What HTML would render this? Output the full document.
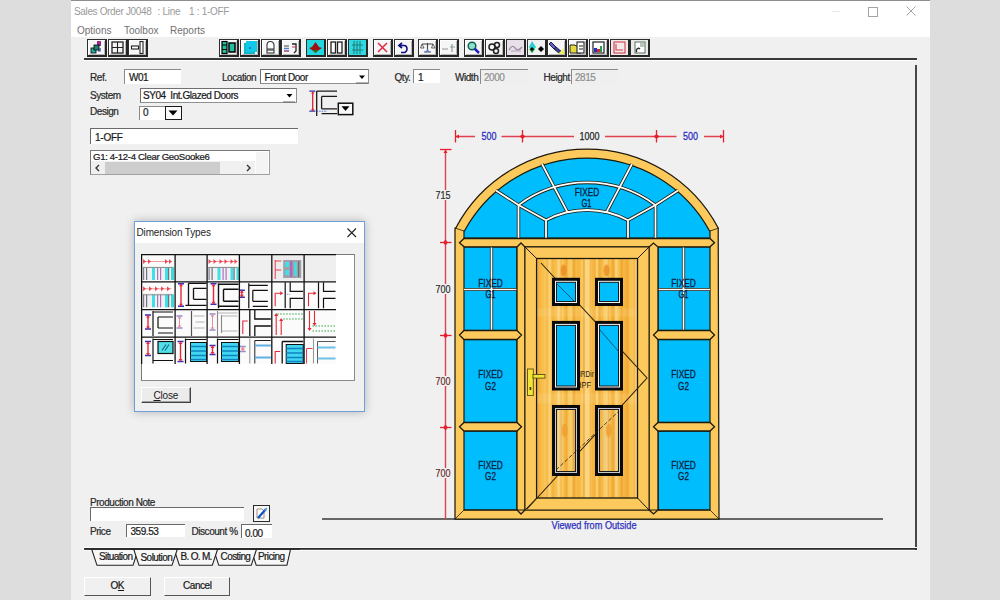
<!DOCTYPE html>
<html><head><meta charset="utf-8">
<style>
html,body{margin:0;padding:0;width:1000px;height:600px;overflow:hidden;background:#dddddd;font-family:"Liberation Sans",sans-serif;}
.a{position:absolute}
#win{position:absolute;left:71px;top:0;width:859px;height:600px;background:#f0f0f0;}
#title{position:absolute;left:71px;top:0;width:859px;height:37px;background:#fff;border-top:1.2px solid #8e8e8e;box-sizing:border-box}
.t{position:absolute;white-space:pre;font-size:10px;line-height:12px;color:#333}
.lbl{position:absolute;white-space:pre;font-size:10px;line-height:12px;color:#2a2a2a;letter-spacing:-0.45px;-webkit-text-stroke:0.22px currentColor}
.tb{position:absolute;top:39.2px;width:16.6px;height:14.6px;border:1px solid #2e2e2e;border-right:2px solid #262626;border-bottom:2px solid #262626;background:#f6f6f6;overflow:hidden;box-shadow:inset 1px 1px 0 #fff, inset -1px -1px 0 #b8b8b8}
.inp{position:absolute;background:#fff;border-top:1px solid #8a8a8a;border-left:1px solid #8a8a8a;box-sizing:border-box}
.inpg{position:absolute;background:#efefef;border-top:1px solid #8a8a8a;border-left:1px solid #8a8a8a;box-sizing:border-box}
.dd{position:absolute;width:13px;height:13px;background:#f0f0f0;border-right:1px solid #555;border-bottom:1px solid #555;box-sizing:border-box}
.dd:after{content:"";position:absolute;left:3px;top:5px;border-left:3.5px solid transparent;border-right:3.5px solid transparent;border-top:4px solid #000}
</style></head><body>
<div id="win"></div>
<div id="title"></div>
<div class="t" style="left:74px;top:6px;color:#9a9a9a;letter-spacing:-0.35px">Sales Order J0048</div><div class="t" style="left:157.5px;top:6px;color:#9a9a9a;letter-spacing:-0.3px">: Line</div><div class="t" style="left:189px;top:6px;color:#9a9a9a;letter-spacing:-0.3px">1 : 1-OFF</div>
<!-- window controls -->
<div class="a" style="left:832px;top:11px;width:8px;height:1px;background:#e8e8e8"></div>
<div class="a" style="left:868px;top:6.5px;width:8px;height:8px;border:1px solid #a4a4a4"></div>
<svg class="a" style="left:905px;top:5px" width="12" height="12"><path d="M1.5 1.5L10.5 10.5M10.5 1.5L1.5 10.5" stroke="#a4a4a4" stroke-width="1"/></svg>
<!-- menu -->
<div class="t" style="left:77px;top:24.5px;color:#707070">Options</div>
<div class="t" style="left:124px;top:24.5px;color:#707070">Toolbox</div>
<div class="t" style="left:170px;top:24.5px;color:#707070">Reports</div>

<!-- toolbar line -->
<div class="a" style="left:84.3px;top:58.4px;width:832.5px;height:1.7px;background:#3a3a3a"></div>
<div class="a" style="left:84.3px;top:60.1px;width:832.5px;height:1px;background:#fff"></div>
<!-- drawing frame right & bottom -->
<div class="a" style="left:915px;top:64.5px;width:1.8px;height:485.2px;background:#474747"></div>
<div class="a" style="left:84px;top:546.8px;width:833px;height:1px;background:#fafafa"></div><div class="a" style="left:84px;top:549.6px;width:833px;height:1px;background:#fafafa"></div>

<!-- TOOLBAR -->
<div id="toolbar">
<div class="tb" style="left:87px"><svg width="17" height="15"><rect x="9" y="1" width="4" height="5" fill="#a02890"/><rect x="3" y="8" width="5" height="5" fill="#20b0a0" stroke="#000" stroke-width="0.8"/><rect x="6" y="5" width="5" height="5" fill="#208070" stroke="#000" stroke-width="0.8"/><path d="M10 11 L12 11 L12 8" stroke="#2030a0" fill="none" stroke-width="1.2"/></svg></div>
<div class="tb" style="left:108px"><svg width="17" height="15"><rect x="3" y="2" width="11" height="11" fill="none" stroke="#222" stroke-width="1.3"/><path d="M8.5 2V13M3 7.5H14" stroke="#222" stroke-width="1.1"/></svg></div>
<div class="tb" style="left:128px"><svg width="17" height="15"><rect x="2.5" y="6" width="7" height="3" fill="#fff" stroke="#222" stroke-width="1.1"/><rect x="11" y="1.5" width="3" height="12" fill="#fff" stroke="#222" stroke-width="1.1"/></svg></div>
<div class="tb" style="left:219px"><svg width="17" height="15"><rect x="2" y="1.5" width="5" height="12" fill="#20c0a0" stroke="#000" stroke-width="1.2"/><path d="M2 5H7M2 9.5H7" stroke="#000"/><rect x="9" y="3" width="6" height="9" fill="#20c0a0" stroke="#000" stroke-width="1.5"/></svg></div>
<div class="tb" style="left:240px"><svg width="17" height="15"><rect x="3" y="3" width="11" height="11" fill="#10b8c8"/><rect x="5" y="1" width="11" height="11" fill="#10c8e8"/><circle cx="9" cy="8" r="1" fill="#2060c0"/></svg></div>
<div class="tb" style="left:261px"><svg width="17" height="15"><path d="M5 9 V5 a3.5 3.5 0 0 1 7 0 V9 Z" fill="#fff" stroke="#333" stroke-width="1.1"/><rect x="5" y="10" width="7" height="3" fill="#fff" stroke="#333" stroke-width="1.1"/></svg></div>
<div class="tb" style="left:281px"><svg width="17" height="15"><path d="M2 6H7M2 8.5H7M2 11H7" stroke-width="1.4" stroke="#5080d0"/><path d="M2 6H7" stroke="#c0a060" stroke-width="1.3"/><path d="M2 11H7" stroke="#d06070" stroke-width="1.3"/><path d="M10 4H14V11L12 13" fill="none" stroke="#222" stroke-width="1.3"/><path d="M10 7H14" stroke="#d03050" stroke-width="1"/></svg></div>
<div class="tb" style="left:306px"><svg width="17" height="15"><rect x="0" y="0" width="17" height="15" fill="#20d8e0"/><path d="M8.5 2 L12 7 L15 8 L12 10 L8.5 13 L5 10 L2 8 L5 7Z" fill="#a01010"/><path d="M6 10 L8.5 13 L11 10 Z" fill="#208020"/></svg></div>
<div class="tb" style="left:327px"><svg width="17" height="15"><rect x="3" y="2" width="4.5" height="11" fill="#fff" stroke="#222" stroke-width="1.3"/><rect x="9.5" y="2" width="4.5" height="11" fill="#fff" stroke="#222" stroke-width="1.3"/></svg></div>
<div class="tb" style="left:348px"><svg width="17" height="15"><rect x="0" y="0" width="17" height="15" fill="#30d8e0"/><path d="M5 1V14M8 1V14M11 1V14M3 5H14M3 10H14" stroke="#208080" stroke-width="1.1"/></svg></div>
<div class="tb" style="left:373px"><svg width="17" height="15"><path d="M4 3 L13 12 M13 3 L4 12" stroke="#e02840" stroke-width="1.5"/></svg></div>
<div class="tb" style="left:394px"><svg width="17" height="15"><path d="M7 3 L4 5.5 L7 8" fill="none" stroke="#101080" stroke-width="1.8"/><path d="M5 5.5 H9 a3 3.5 0 0 1 0 7 H6" fill="none" stroke="#101080" stroke-width="1.6"/></svg></div>
<div class="tb" style="left:418px"><svg width="17" height="15"><path d="M3 4H14M8.5 3V12M5 12H12" stroke="#444" stroke-width="1.1"/><path d="M3 4 L1.5 8 H5 Z M14 4 L12.5 8 H16 Z" fill="none" stroke="#444" stroke-width="0.8"/><path d="M6 12 L8.5 9 L11 12Z" fill="#6080e0"/></svg></div>
<div class="tb" style="left:439px"><svg width="17" height="15"><path d="M2 9H8M10 7H15M12 4V12" stroke="#8a9aa0" stroke-width="1.2"/></svg></div>
<div class="tb" style="left:464px"><svg width="17" height="15"><circle cx="7" cy="6" r="3.8" fill="#90e0d0" stroke="#106050" stroke-width="1.5"/><path d="M9.5 8.5 L14 13" stroke="#2020c0" stroke-width="2.5"/></svg></div>
<div class="tb" style="left:485px"><svg width="17" height="15"><circle cx="6" cy="7" r="3" fill="none" stroke="#222" stroke-width="1.5"/><circle cx="11" cy="5" r="2.5" fill="none" stroke="#222" stroke-width="1.5"/><circle cx="10" cy="11" r="2.5" fill="none" stroke="#222" stroke-width="1.5"/></svg></div>
<div class="tb" style="left:506px"><svg width="17" height="15"><rect x="0" y="0" width="17" height="15" fill="#e8e0e8"/><path d="M2 10 Q5 4 8 8 T15 7" fill="none" stroke="#a08aa8" stroke-width="1.3"/><path d="M4 11H14" stroke="#b0a0b8" stroke-width="1"/></svg></div>
<div class="tb" style="left:527px"><svg width="17" height="15"><rect x="0" y="0" width="17" height="15" fill="#f0f0f0"/><path d="M4 1 L8 7 L4 13 L1 7Z" fill="#20d8c0"/><path d="M4 2 L6 6 L2 6Z" fill="#40c0f0"/><path d="M1 9H7L4 13Z" fill="#20a040"/><path d="M10 9 L13 6 L16 9 L13 12Z" fill="#000"/><path d="M2 9 L4 7 L6 9 L4 11Z" fill="#000"/></svg></div>
<div class="tb" style="left:547px"><svg width="17" height="15"><path d="M3 2 L8 7 L6 9 L1 4Z" fill="#6060c0" stroke="#202050" stroke-width="1"/><path d="M8 7 L14 12 L12 14 L6 9Z" fill="#404090" stroke="#202050" stroke-width="1"/><path d="M10 14 L16 8 V14Z" fill="#f0f060"/></svg></div>
<div class="tb" style="left:568px"><svg width="17" height="15"><path d="M1 5H6L7 6H12V13H1Z" fill="#e8d840" stroke="#222" stroke-width="1"/><rect x="8" y="2" width="7" height="11" fill="#fff" stroke="#222" stroke-width="1.1"/><path d="M10 6H14M10 9H14" stroke="#222"/></svg></div>
<div class="tb" style="left:589px"><svg width="17" height="15"><rect x="3" y="2" width="11" height="11" fill="#fff" stroke="#222" stroke-width="1.2"/><rect x="4" y="8" width="3" height="4" fill="#2030c0"/><rect x="7" y="9" width="3" height="3" fill="#e02030"/><rect x="10" y="6" width="2" height="6" fill="#20a040"/></svg></div>
<div class="tb" style="left:610px"><svg width="17" height="15"><rect x="0" y="0" width="17" height="15" fill="#f4e8e8"/><rect x="3" y="2" width="11" height="11" fill="none" stroke="#d04050" stroke-width="1.1"/><path d="M5 4V10H12" fill="none" stroke="#d04050" stroke-width="1.1"/></svg></div>
<div class="tb" style="left:630px"><svg width="17" height="15"><rect x="0" y="0" width="17" height="15" fill="#e8ece8"/><rect x="4" y="2" width="10" height="11" fill="#fff" stroke="#606860" stroke-width="1"/><path d="M9 4H13M9 6H13" stroke="#709070" stroke-width="1"/><path d="M6 12 a2 2 0 1 1 3 -3" fill="none" stroke="#303030" stroke-width="1.3"/></svg></div>
</div><!--/tb-->

<!-- FORM -->
<div id="form">
<div class="lbl" style="left:90px;top:71.5px">Ref.</div>
<div class="inp" style="left:124px;top:68.5px;width:57px;height:15px"></div>
<div class="lbl" style="left:129px;top:72px;color:#1a1a1a">W01</div>
<div class="lbl" style="left:222px;top:71.5px">Location</div>
<div class="a" style="left:259.5px;top:68.5px;width:109.5px;height:15.7px;background:#fff;border:1.5px solid #707070;box-sizing:border-box;border-right-color:#909090;border-bottom-color:#909090"></div>
<div class="lbl" style="left:264.5px;top:71.5px;color:#1a1a1a">Front Door</div>
<svg class="a" style="left:356px;top:73px" width="12" height="11"><path d="M3 2.5H9L6 6Z" fill="#000"/><path d="M0 10H12" stroke="#666" stroke-width="1"/></svg>
<div class="lbl" style="left:394.5px;top:71.5px">Qty.</div>
<div class="inp" style="left:413px;top:69px;width:26.5px;height:14px"></div>
<div class="lbl" style="left:418px;top:72px;color:#1a1a1a">1</div>
<div class="lbl" style="left:455px;top:71.5px">Width</div>
<div class="inpg" style="left:480px;top:68.5px;width:47.5px;height:15px"></div>
<div class="lbl" style="left:484px;top:72px;color:#909090">2000</div>
<div class="lbl" style="left:543.5px;top:71.5px">Height</div>
<div class="inpg" style="left:571px;top:68.5px;width:46.5px;height:15px"></div>
<div class="lbl" style="left:575px;top:72px;color:#909090">2815</div>

<div class="lbl" style="left:90px;top:89.5px">System</div>
<div class="a" style="left:139.5px;top:88.3px;width:157.3px;height:15px;background:#fff;border:1.5px solid #707070;box-sizing:border-box;border-right-color:#909090;border-bottom-color:#909090"></div>
<div class="lbl" style="left:143px;top:90px;color:#1a1a1a">SY04  Int.Glazed Doors</div>
<svg class="a" style="left:283px;top:92px" width="12" height="11"><path d="M3.5 2H9.5L6.5 5.5Z" fill="#000"/><path d="M0 10H12" stroke="#666" stroke-width="1"/></svg>
<div class="lbl" style="left:90px;top:106px">Design</div>
<div class="inp" style="left:138.5px;top:105.5px;width:26.5px;height:14px"></div>
<div class="lbl" style="left:143px;top:106.5px;color:#1a1a1a">0</div>
<div class="a" style="left:164.5px;top:105.5px;width:17.2px;height:14.2px;background:#fafafa;border:1.6px solid #1a1a1a;box-sizing:border-box"></div>
<svg class="a" style="left:166px;top:108px" width="14" height="10"><path d="M2.5 2.5H11.5L7 7.5Z" fill="#000"/></svg>

<svg class="a" style="left:306px;top:88px" width="50" height="30">
<path d="M3.3 3.2H9.4M3.3 23.2H9.4" stroke="#3030b0" stroke-width="1.2"/>
<path d="M6.7 3.5V23" stroke="#e02030" stroke-width="1.3"/>
<path d="M5 5.5L6.7 3.5L8.4 5.5ZM5 21L6.7 23L8.4 21Z" fill="#e02030"/>
<path d="M10.7 3V28M10.7 3.2H31M15.6 8.4H31M15.6 8.4V20.8M15.6 20.8H31M15.6 25.7H31" fill="none" stroke="#1a1a1a" stroke-width="1.3"/>
<path d="M10.7 23.2H21" stroke="#3050c0" stroke-width="0.8" stroke-dasharray="1.5 1"/>
<rect x="32.3" y="15.2" width="14.5" height="11.4" fill="#fafafa" stroke="#111" stroke-width="1.5"/>
<path d="M35.5 18.2H43.5L39.5 23Z" fill="#000"/>
</svg>

<div class="inp" style="left:89.8px;top:128.2px;width:208.6px;height:16px;border-top:1.5px solid #6a6a6a;border-left:1.5px solid #6a6a6a"></div>
<div class="lbl" style="left:95px;top:131.5px;color:#1a1a1a;letter-spacing:-0.25px">1-OFF</div>

<div class="a" style="left:89.8px;top:150.2px;width:180px;height:25.3px;background:#fff;border:1.5px solid #7a7a7a;box-sizing:border-box;border-right-color:#a0a0a0;border-bottom-color:#a0a0a0"></div>
<div class="lbl" style="left:93px;top:151.3px;color:#1a1a1a;font-size:9.6px;letter-spacing:-0.32px">G1: 4-12-4 Clear GeoSooke6</div>
<div class="a" style="left:91.3px;top:161.2px;width:164px;height:12.8px;background:#f0f0f0"></div>
<div class="a" style="left:104.8px;top:161.5px;width:115px;height:12.5px;background:#cdcdcd"></div>
<svg class="a" style="left:93px;top:162.5px" width="10" height="10"><path d="M6 2L3 5L6 8" fill="none" stroke="#333" stroke-width="1.4"/></svg>
<svg class="a" style="left:244px;top:162.5px" width="10" height="10"><path d="M3 2L6 5L3 8" fill="none" stroke="#333" stroke-width="1.4"/></svg>
<div class="a" style="left:255.5px;top:151.7px;width:12.8px;height:22.3px;background:#f4f4f4"></div>

</div><!--/form-->

<!-- DRAWING -->
<svg id="draw" class="a" style="left:0;top:0" width="1000" height="600">
<line x1="322" y1="519" x2="883" y2="519" stroke="#3a3a3a" stroke-width="1.6"/>
<path d="M455.8 228.0 A148.5 148.5 0 0 1 718.2 228.0 L719 519 L455 519 L455 228.0 Z" fill="#fcc95c" stroke="#1e1a0c" stroke-width="1.25"/>
<path d="M464 238 L464 231.0 L464.4 231.0 A139.5 139.5 0 0 1 709.6 231.0 L710 231.0 L710 238 Z" fill="#00bdfd" stroke="#1e1a0c" stroke-width="1.2"/>
<line x1="455" y1="228" x2="464" y2="231" stroke="#1e1a0c" stroke-width="0.8"/>
<line x1="719" y1="228" x2="710" y2="231" stroke="#1e1a0c" stroke-width="0.8"/>
<path d="M518.5 205.1 A115.0 115.0 0 0 1 655.5 205.1" fill="none" stroke="#1e1a0c" stroke-width="3.4"/>
<path d="M546 220.2 A87.5 87.5 0 0 1 628 220.2" fill="none" stroke="#1e1a0c" stroke-width="3.4"/>
<path d="M518.5 205.1 L518.5 238" fill="none" stroke="#1e1a0c" stroke-width="3.4"/>
<path d="M655.5 205.1 L655.5 238" fill="none" stroke="#1e1a0c" stroke-width="3.4"/>
<path d="M546 220.2 L546 238" fill="none" stroke="#1e1a0c" stroke-width="3.4"/>
<path d="M628 220.2 L628 238" fill="none" stroke="#1e1a0c" stroke-width="3.4"/>
<path d="M496 190.5 L518.5 205.1 L546 220.2" fill="none" stroke="#1e1a0c" stroke-width="3.4"/>
<path d="M678 190.5 L655.5 205.1 L628 220.2" fill="none" stroke="#1e1a0c" stroke-width="3.4"/>
<path d="M542 164 L567.5 212.2" fill="none" stroke="#1e1a0c" stroke-width="3.4"/>
<path d="M632 164 L606.5 212.2" fill="none" stroke="#1e1a0c" stroke-width="3.4"/>
<path d="M518.5 205.1 A115.0 115.0 0 0 1 655.5 205.1" fill="none" stroke="#ffffff" stroke-width="1.8"/>
<path d="M546 220.2 A87.5 87.5 0 0 1 628 220.2" fill="none" stroke="#ffffff" stroke-width="1.8"/>
<path d="M518.5 205.1 L518.5 238" fill="none" stroke="#ffffff" stroke-width="1.8"/>
<path d="M655.5 205.1 L655.5 238" fill="none" stroke="#ffffff" stroke-width="1.8"/>
<path d="M546 220.2 L546 238" fill="none" stroke="#ffffff" stroke-width="1.8"/>
<path d="M628 220.2 L628 238" fill="none" stroke="#ffffff" stroke-width="1.8"/>
<path d="M496 190.5 L518.5 205.1 L546 220.2" fill="none" stroke="#ffffff" stroke-width="1.8"/>
<path d="M678 190.5 L655.5 205.1 L628 220.2" fill="none" stroke="#ffffff" stroke-width="1.8"/>
<path d="M542 164 L567.5 212.2" fill="none" stroke="#ffffff" stroke-width="1.8"/>
<path d="M632 164 L606.5 212.2" fill="none" stroke="#ffffff" stroke-width="1.8"/>
<rect x="464" y="247" width="53" height="83.5" fill="#00bdfd" stroke="#1e1a0c" stroke-width="1.2"/>
<rect x="464" y="339.5" width="53" height="83.0" fill="#00bdfd" stroke="#1e1a0c" stroke-width="1.2"/>
<rect x="464" y="431" width="53" height="79" fill="#00bdfd" stroke="#1e1a0c" stroke-width="1.2"/>
<rect x="658" y="247" width="52" height="83.5" fill="#00bdfd" stroke="#1e1a0c" stroke-width="1.2"/>
<rect x="658" y="339.5" width="52" height="83.0" fill="#00bdfd" stroke="#1e1a0c" stroke-width="1.2"/>
<rect x="658" y="431" width="52" height="79" fill="#00bdfd" stroke="#1e1a0c" stroke-width="1.2"/>
<path d="M491.5 247 L491.5 330.5" fill="none" stroke="#1e1a0c" stroke-width="3.2"/>
<path d="M464 289.5 L517 289.5" fill="none" stroke="#1e1a0c" stroke-width="3.2"/>
<path d="M683.5 247 L683.5 330.5" fill="none" stroke="#1e1a0c" stroke-width="3.2"/>
<path d="M658 289.5 L710 289.5" fill="none" stroke="#1e1a0c" stroke-width="3.2"/>
<path d="M491.5 247 L491.5 330.5" fill="none" stroke="#ffffff" stroke-width="1.7"/>
<path d="M464 289.5 L517 289.5" fill="none" stroke="#ffffff" stroke-width="1.7"/>
<path d="M683.5 247 L683.5 330.5" fill="none" stroke="#ffffff" stroke-width="1.7"/>
<path d="M658 289.5 L710 289.5" fill="none" stroke="#ffffff" stroke-width="1.7"/>
<path d="M464 238.5 L710 238.5 L714.5 242.65 L710 246.8 L464 246.8 L459.5 242.65 Z" fill="#fcc95c" stroke="#1e1a0c" stroke-width="1.3"/>
<path d="M517 247 L521.0 243 L525 247 L525 510 L521.0 514 L517 510 Z" fill="#fcc95c" stroke="#1e1a0c" stroke-width="1.3"/>
<path d="M649 247 L653.5 243 L658 247 L658 510 L653.5 514 L649 510 Z" fill="#fcc95c" stroke="#1e1a0c" stroke-width="1.3"/>
<path d="M464 330.5 L517 330.5 L521.5 335.0 L517 339.5 L464 339.5 L459.5 335.0 Z" fill="#fcc95c" stroke="#1e1a0c" stroke-width="1.3"/>
<path d="M464 422.5 L517 422.5 L521.5 426.75 L517 431 L464 431 L459.5 426.75 Z" fill="#fcc95c" stroke="#1e1a0c" stroke-width="1.3"/>
<path d="M658 330.5 L710 330.5 L714.5 335.0 L710 339.5 L658 339.5 L653.5 335.0 Z" fill="#fcc95c" stroke="#1e1a0c" stroke-width="1.3"/>
<path d="M658 422.5 L710 422.5 L714.5 426.75 L710 431 L658 431 L653.5 426.75 Z" fill="#fcc95c" stroke="#1e1a0c" stroke-width="1.3"/>
<line x1="464" y1="510" x2="710" y2="510" stroke="#1e1a0c" stroke-width="1"/>
<line x1="455" y1="519" x2="464" y2="510" stroke="#1e1a0c" stroke-width="0.8"/>
<line x1="719" y1="519" x2="710" y2="510" stroke="#1e1a0c" stroke-width="0.8"/>
<rect x="525" y="247" width="124" height="263" fill="#fcc95c" stroke="#1e1a0c" stroke-width="1"/>
<line x1="525" y1="247" x2="536.6" y2="258.5" stroke="#1e1a0c" stroke-width="1"/>
<line x1="649" y1="247" x2="637.5" y2="258.5" stroke="#1e1a0c" stroke-width="1"/>
<line x1="525" y1="510" x2="536.6" y2="498" stroke="#1e1a0c" stroke-width="1"/>
<line x1="649" y1="510" x2="637.5" y2="498" stroke="#1e1a0c" stroke-width="1"/>
<defs><pattern id="wood" patternUnits="userSpaceOnUse" x="536.6" y="258.5" width="101" height="240"><rect x="0.0" y="0" width="1.2" height="240" fill="#f9cc68"/><rect x="1.2" y="0" width="1.5" height="240" fill="#eda42e"/><rect x="2.7" y="0" width="0.8" height="240" fill="#f5b640"/><rect x="3.5" y="0" width="2.0" height="240" fill="#f5b640"/><rect x="5.5" y="0" width="1.2" height="240" fill="#f7be4c"/><rect x="6.7" y="0" width="0.8" height="240" fill="#f7be4c"/><rect x="7.5" y="0" width="1.0" height="240" fill="#f5b640"/><rect x="8.5" y="0" width="0.8" height="240" fill="#fbd684"/><rect x="9.3" y="0" width="1.5" height="240" fill="#f5b640"/><rect x="10.8" y="0" width="1.0" height="240" fill="#f5b640"/><rect x="11.8" y="0" width="2.0" height="240" fill="#fbd684"/><rect x="13.8" y="0" width="0.8" height="240" fill="#f8c65c"/><rect x="14.6" y="0" width="2.0" height="240" fill="#f5b640"/><rect x="16.6" y="0" width="1.0" height="240" fill="#eda42e"/><rect x="17.6" y="0" width="2.5" height="240" fill="#f7be4c"/><rect x="20.1" y="0" width="0.8" height="240" fill="#f7be4c"/><rect x="20.9" y="0" width="2.0" height="240" fill="#fbd684"/><rect x="22.9" y="0" width="0.8" height="240" fill="#f9cc68"/><rect x="23.7" y="0" width="0.8" height="240" fill="#f7be4c"/><rect x="24.5" y="0" width="1.0" height="240" fill="#f1ab34"/><rect x="25.5" y="0" width="1.5" height="240" fill="#f9cc68"/><rect x="27.0" y="0" width="2.0" height="240" fill="#f5b640"/><rect x="29.0" y="0" width="2.0" height="240" fill="#f1ab34"/><rect x="31.0" y="0" width="2.0" height="240" fill="#f8c65c"/><rect x="33.0" y="0" width="2.5" height="240" fill="#f9cc68"/><rect x="35.5" y="0" width="0.8" height="240" fill="#f7be4c"/><rect x="36.3" y="0" width="2.0" height="240" fill="#eda42e"/><rect x="38.3" y="0" width="1.0" height="240" fill="#f1ab34"/><rect x="39.3" y="0" width="0.8" height="240" fill="#f7be4c"/><rect x="40.1" y="0" width="2.5" height="240" fill="#f5b640"/><rect x="42.6" y="0" width="2.0" height="240" fill="#f5b640"/><rect x="44.6" y="0" width="2.0" height="240" fill="#f9cc68"/><rect x="46.6" y="0" width="1.5" height="240" fill="#eda42e"/><rect x="48.1" y="0" width="2.0" height="240" fill="#fbd684"/><rect x="50.1" y="0" width="1.2" height="240" fill="#fbd684"/><rect x="51.3" y="0" width="2.0" height="240" fill="#fbd684"/><rect x="53.3" y="0" width="1.2" height="240" fill="#f1ab34"/><rect x="54.5" y="0" width="1.0" height="240" fill="#f8c65c"/><rect x="55.5" y="0" width="1.0" height="240" fill="#eda42e"/><rect x="56.5" y="0" width="1.0" height="240" fill="#f5b640"/><rect x="57.5" y="0" width="2.0" height="240" fill="#f1ab34"/><rect x="59.5" y="0" width="2.0" height="240" fill="#fbd684"/><rect x="61.5" y="0" width="1.2" height="240" fill="#eda42e"/><rect x="62.7" y="0" width="1.5" height="240" fill="#f1ab34"/><rect x="64.2" y="0" width="2.0" height="240" fill="#f5b640"/><rect x="66.2" y="0" width="0.8" height="240" fill="#f7be4c"/><rect x="67.0" y="0" width="1.5" height="240" fill="#f9cc68"/><rect x="68.5" y="0" width="1.2" height="240" fill="#f9cc68"/><rect x="69.7" y="0" width="1.5" height="240" fill="#fbd684"/><rect x="71.2" y="0" width="0.8" height="240" fill="#eda42e"/><rect x="72.0" y="0" width="0.8" height="240" fill="#f8c65c"/><rect x="72.8" y="0" width="2.0" height="240" fill="#f7be4c"/><rect x="74.8" y="0" width="1.2" height="240" fill="#f1ab34"/><rect x="76.0" y="0" width="2.5" height="240" fill="#f1ab34"/><rect x="78.5" y="0" width="2.0" height="240" fill="#fbd684"/><rect x="80.5" y="0" width="2.0" height="240" fill="#f8c65c"/><rect x="82.5" y="0" width="1.5" height="240" fill="#f5b640"/><rect x="84.0" y="0" width="0.8" height="240" fill="#f1ab34"/><rect x="84.8" y="0" width="1.5" height="240" fill="#eda42e"/><rect x="86.3" y="0" width="2.5" height="240" fill="#f5b640"/><rect x="88.8" y="0" width="0.8" height="240" fill="#eda42e"/><rect x="89.6" y="0" width="2.5" height="240" fill="#f1ab34"/><rect x="92.1" y="0" width="2.5" height="240" fill="#f7be4c"/><rect x="94.6" y="0" width="2.5" height="240" fill="#f8c65c"/><rect x="97.1" y="0" width="1.5" height="240" fill="#f1ab34"/><rect x="98.6" y="0" width="2.5" height="240" fill="#fbd684"/><ellipse cx="27" cy="12" rx="3" ry="6" fill="#e88a20" opacity="0.8"/><ellipse cx="70" cy="12" rx="3" ry="6" fill="#e88a20" opacity="0.8"/><ellipse cx="28" cy="172" rx="3" ry="7" fill="#ee9a28" opacity="0.6"/><ellipse cx="72" cy="172" rx="3" ry="7" fill="#ee9a28" opacity="0.6"/><rect x="0" y="135" width="101" height="10" fill="#fde4a8" opacity="0.18"/><rect x="0" y="50" width="101" height="8" fill="#fde4a8" opacity="0.15"/></pattern></defs>
<rect x="536.6" y="258.5" width="100.9" height="239.5" fill="url(#wood)" stroke="#1e1a0c" stroke-width="1.3"/>
<text x="576" y="376.5" font-family="Liberation Sans" font-size="9" fill="#2a2410" textLength="18" lengthAdjust="spacingAndGlyphs">HRDir</text>
<text x="576" y="387.5" font-family="Liberation Sans" font-size="9" fill="#2a2410" textLength="15" lengthAdjust="spacingAndGlyphs">HPF</text>
<path d="M541 263 L647 378 L527 509" fill="none" stroke="#2a2208" stroke-width="1.1"/>
<rect x="552" y="277.8" width="28" height="28.19999999999999" fill="#0a0a0a"/>
<rect x="555" y="280.8" width="22" height="22.19999999999999" fill="#f4f4f4"/>
<rect x="556.5" y="282.3" width="19" height="19.19999999999999" fill="#00bdfd" stroke="#1a1a1a" stroke-width="1"/>
<rect x="595" y="277.8" width="28" height="28.19999999999999" fill="#0a0a0a"/>
<rect x="598" y="280.8" width="22" height="22.19999999999999" fill="#f4f4f4"/>
<rect x="599.5" y="282.3" width="19" height="19.19999999999999" fill="#00bdfd" stroke="#1a1a1a" stroke-width="1"/>
<rect x="552" y="320.9" width="28" height="69.60000000000002" fill="#0a0a0a"/>
<rect x="555" y="323.9" width="22" height="63.60000000000002" fill="#f4f4f4"/>
<rect x="556.5" y="325.4" width="19" height="60.60000000000002" fill="#00bdfd" stroke="#1a1a1a" stroke-width="1"/>
<rect x="595" y="320.9" width="28" height="69.60000000000002" fill="#0a0a0a"/>
<rect x="598" y="323.9" width="22" height="63.60000000000002" fill="#f4f4f4"/>
<rect x="599.5" y="325.4" width="19" height="60.60000000000002" fill="#00bdfd" stroke="#1a1a1a" stroke-width="1"/>
<rect x="552" y="405" width="28" height="71" fill="#0a0a0a"/>
<rect x="555" y="408" width="22" height="65" fill="#c8c8d0"/>
<rect x="556.5" y="409.5" width="19" height="62" fill="url(#wood)" stroke="#1a1a1a" stroke-width="1"/>
<rect x="595" y="405" width="28" height="71" fill="#0a0a0a"/>
<rect x="598" y="408" width="22" height="65" fill="#c8c8d0"/>
<rect x="599.5" y="409.5" width="19" height="62" fill="url(#wood)" stroke="#1a1a1a" stroke-width="1"/>
<ellipse cx="565" cy="430" rx="2.5" ry="6" fill="#f0a030" opacity="0.55"/>
<ellipse cx="609" cy="430" rx="2.5" ry="6" fill="#f0a030" opacity="0.55"/>
<path d="M556 283 L575 302" stroke="#1a3a50" stroke-width="0.8"/>
<path d="M600 330 L619 352" stroke="#1a3a50" stroke-width="0.8"/>
<path d="M556 470 L618 412" stroke="#2a2010" stroke-width="0.8" stroke-dasharray="4 2"/>
<rect x="527.5" y="369" width="5.8" height="26.5" fill="#f2e33a" stroke="#5a5010" stroke-width="0.9"/>
<rect x="533" y="374.5" width="12" height="3.6" fill="#f2e33a" stroke="#5a5010" stroke-width="0.9"/>
<rect x="529.6" y="387" width="1.6" height="3" fill="#3a3010"/>
<text x="587" y="196.3" text-anchor="middle" font-family="Liberation Sans" font-size="10.6" fill="#0c2444" stroke="#0c2444" stroke-width="0.35" textLength="24.5" lengthAdjust="spacingAndGlyphs">FIXED</text>
<text x="586.5" y="206.8" text-anchor="middle" font-family="Liberation Sans" font-size="10.6" fill="#0c2444" stroke="#0c2444" stroke-width="0.35" textLength="10" lengthAdjust="spacingAndGlyphs">G1</text>
<text x="490.5" y="286.5" text-anchor="middle" font-family="Liberation Sans" font-size="10.6" fill="#0c2444" stroke="#0c2444" stroke-width="0.35" textLength="24.5" lengthAdjust="spacingAndGlyphs">FIXED</text>
<text x="490.5" y="297.5" text-anchor="middle" font-family="Liberation Sans" font-size="10.6" fill="#0c2444" stroke="#0c2444" stroke-width="0.35" textLength="10" lengthAdjust="spacingAndGlyphs">G1</text>
<text x="490.5" y="378.3" text-anchor="middle" font-family="Liberation Sans" font-size="10.6" fill="#0c2444" stroke="#0c2444" stroke-width="0.35" textLength="24.5" lengthAdjust="spacingAndGlyphs">FIXED</text>
<text x="490.5" y="389.5" text-anchor="middle" font-family="Liberation Sans" font-size="10.6" fill="#0c2444" stroke="#0c2444" stroke-width="0.35" textLength="10.8" lengthAdjust="spacingAndGlyphs">G2</text>
<text x="490.5" y="468.5" text-anchor="middle" font-family="Liberation Sans" font-size="10.6" fill="#0c2444" stroke="#0c2444" stroke-width="0.35" textLength="24.5" lengthAdjust="spacingAndGlyphs">FIXED</text>
<text x="490.5" y="479.5" text-anchor="middle" font-family="Liberation Sans" font-size="10.6" fill="#0c2444" stroke="#0c2444" stroke-width="0.35" textLength="10.8" lengthAdjust="spacingAndGlyphs">G2</text>
<text x="683.5" y="286.5" text-anchor="middle" font-family="Liberation Sans" font-size="10.6" fill="#0c2444" stroke="#0c2444" stroke-width="0.35" textLength="24.5" lengthAdjust="spacingAndGlyphs">FIXED</text>
<text x="683.5" y="297.5" text-anchor="middle" font-family="Liberation Sans" font-size="10.6" fill="#0c2444" stroke="#0c2444" stroke-width="0.35" textLength="10" lengthAdjust="spacingAndGlyphs">G1</text>
<text x="683.5" y="378.3" text-anchor="middle" font-family="Liberation Sans" font-size="10.6" fill="#0c2444" stroke="#0c2444" stroke-width="0.35" textLength="24.5" lengthAdjust="spacingAndGlyphs">FIXED</text>
<text x="683.5" y="389.5" text-anchor="middle" font-family="Liberation Sans" font-size="10.6" fill="#0c2444" stroke="#0c2444" stroke-width="0.35" textLength="10.8" lengthAdjust="spacingAndGlyphs">G2</text>
<text x="683.5" y="468.5" text-anchor="middle" font-family="Liberation Sans" font-size="10.6" fill="#0c2444" stroke="#0c2444" stroke-width="0.35" textLength="24.5" lengthAdjust="spacingAndGlyphs">FIXED</text>
<text x="683.5" y="479.5" text-anchor="middle" font-family="Liberation Sans" font-size="10.6" fill="#0c2444" stroke="#0c2444" stroke-width="0.35" textLength="10.8" lengthAdjust="spacingAndGlyphs">G2</text>
<line x1="455" y1="136.5" x2="723.5" y2="136.5" stroke="#e04050" stroke-width="1.3"/>
<line x1="455.5" y1="130" x2="455.5" y2="142.5" stroke="#e8202e" stroke-width="1.3"/>
<path d="M455.5 136.5 L459.0 134.5 L459.0 138.5Z" fill="#e8202e"/>
<line x1="522.5" y1="130" x2="522.5" y2="142.5" stroke="#e8202e" stroke-width="1.3"/>
<path d="M519.5 136.5 L522.5 134 L525.5 136.5 L522.5 139Z" fill="#e8202e"/>
<line x1="656.5" y1="130" x2="656.5" y2="142.5" stroke="#e8202e" stroke-width="1.3"/>
<path d="M653.5 136.5 L656.5 134 L659.5 136.5 L656.5 139Z" fill="#e8202e"/>
<line x1="723.5" y1="130" x2="723.5" y2="142.5" stroke="#e8202e" stroke-width="1.3"/>
<path d="M723.5 136.5 L720.0 134.5 L720.0 138.5Z" fill="#e8202e"/>
<rect x="475" y="131" width="26.5" height="10" fill="#f0f0f0"/>
<rect x="574" y="131" width="31" height="10" fill="#f0f0f0"/>
<rect x="676.5" y="131" width="27.5" height="10" fill="#f0f0f0"/>
<text x="489" y="139.5" text-anchor="middle" font-family="Liberation Sans" font-size="11" fill="#3030c0" stroke="#3030c0" stroke-width="0.3" textLength="15" lengthAdjust="spacingAndGlyphs">500</text>
<text x="589.5" y="139.5" text-anchor="middle" font-family="Liberation Sans" font-size="11" fill="#222" stroke="#222" stroke-width="0.25" textLength="20" lengthAdjust="spacingAndGlyphs">1000</text>
<text x="690.5" y="139.5" text-anchor="middle" font-family="Liberation Sans" font-size="11" fill="#3030c0" stroke="#3030c0" stroke-width="0.3" textLength="15" lengthAdjust="spacingAndGlyphs">500</text>
<line x1="445.5" y1="149" x2="445.5" y2="519" stroke="#e04050" stroke-width="1.4"/>
<line x1="440" y1="149.5" x2="451.5" y2="149.5" stroke="#e8202e" stroke-width="1.3"/>
<path d="M445.5 149.5 L443.5 153.0 L447.5 153.0Z" fill="#e8202e"/>
<line x1="440" y1="242.5" x2="451.5" y2="242.5" stroke="#e8202e" stroke-width="1.3"/>
<path d="M445.5 239.5 L448 242.5 L445.5 245.5 L443 242.5Z" fill="#e8202e"/>
<line x1="440" y1="335.5" x2="451.5" y2="335.5" stroke="#e8202e" stroke-width="1.3"/>
<path d="M445.5 332.5 L448 335.5 L445.5 338.5 L443 335.5Z" fill="#e8202e"/>
<line x1="440" y1="427.5" x2="451.5" y2="427.5" stroke="#e8202e" stroke-width="1.3"/>
<path d="M445.5 424.5 L448 427.5 L445.5 430.5 L443 427.5Z" fill="#e8202e"/>
<rect x="435" y="190" width="16" height="10" fill="#f0f0f0"/>
<text x="443" y="199" text-anchor="middle" font-family="Liberation Sans" font-size="11" fill="#2a2a2a" stroke="#2a2a2a" stroke-width="0.2" textLength="15" lengthAdjust="spacingAndGlyphs">715</text>
<rect x="435" y="284" width="16" height="10" fill="#f0f0f0"/>
<text x="443" y="293" text-anchor="middle" font-family="Liberation Sans" font-size="11" fill="#2a2a2a" stroke="#2a2a2a" stroke-width="0.2" textLength="15" lengthAdjust="spacingAndGlyphs">700</text>
<rect x="435" y="376" width="16" height="10" fill="#f0f0f0"/>
<text x="443" y="385" text-anchor="middle" font-family="Liberation Sans" font-size="11" fill="#6a2a2a" stroke="#6a2a2a" stroke-width="0.2" textLength="15" lengthAdjust="spacingAndGlyphs">700</text>
<rect x="435" y="468" width="16" height="10" fill="#f0f0f0"/>
<text x="443" y="477" text-anchor="middle" font-family="Liberation Sans" font-size="11" fill="#6a2a2a" stroke="#6a2a2a" stroke-width="0.2" textLength="15" lengthAdjust="spacingAndGlyphs">700</text>
<text x="594" y="528.5" text-anchor="middle" font-family="Liberation Sans" font-size="10" fill="#3030c0" stroke="#3030c0" stroke-width="0.25" textLength="85" lengthAdjust="spacingAndGlyphs">Viewed from Outside</text>
</svg>

<!-- DIALOG -->
<div id="dialog">

<div class="a" style="left:133.5px;top:221px;width:231px;height:191px;background:#f0f0f0;border:1px solid #6f9fd6;box-sizing:border-box;box-shadow:0 0 9px rgba(0,0,0,0.26)"></div>
<div class="a" style="left:134.5px;top:222px;width:229px;height:21px;background:#fff"></div>
<div class="t" style="left:136.5px;top:227.3px;color:#1e1e1e;letter-spacing:-0.15px">Dimension Types</div>
<svg class="a" style="left:346px;top:227px" width="12" height="12"><path d="M1.5 1.5L10 10M10 1.5L1.5 10" stroke="#222" stroke-width="1.1"/></svg>
<div class="a" style="left:141px;top:254px;width:213.5px;height:126.5px;background:#fff;border:1.3px solid #7a7a7a;box-sizing:border-box;border-right-color:#8a8a8a;border-bottom-color:#8a8a8a"></div>
<svg class="a" style="left:141px;top:254px" width="196" height="111"><rect x="0" y="0" width="33.5" height="27.3" fill="#fbfbfb"/>
<rect x="33.5" y="0" width="32.0" height="27.3" fill="#efefef"/>
<rect x="65.5" y="0" width="32.3" height="27.3" fill="#fbfbfb"/>
<rect x="97.8" y="0" width="32.39999999999999" height="27.3" fill="#efefef"/>
<rect x="130.2" y="0" width="32.30000000000001" height="27.3" fill="#fbfbfb"/>
<rect x="162.5" y="0" width="32.5" height="27.3" fill="#efefef"/>
<rect x="0" y="27.3" width="33.5" height="27.7" fill="#fbfbfb"/>
<rect x="33.5" y="27.3" width="32.0" height="27.7" fill="#fbfbfb"/>
<rect x="65.5" y="27.3" width="32.3" height="27.7" fill="#fbfbfb"/>
<rect x="97.8" y="27.3" width="32.39999999999999" height="27.7" fill="#fbfbfb"/>
<rect x="130.2" y="27.3" width="32.30000000000001" height="27.7" fill="#fbfbfb"/>
<rect x="162.5" y="27.3" width="32.5" height="27.7" fill="#fbfbfb"/>
<rect x="0" y="55" width="33.5" height="27.5" fill="#fbfbfb"/>
<rect x="33.5" y="55" width="32.0" height="27.5" fill="#fbfbfb"/>
<rect x="65.5" y="55" width="32.3" height="27.5" fill="#fbfbfb"/>
<rect x="97.8" y="55" width="32.39999999999999" height="27.5" fill="#fbfbfb"/>
<rect x="130.2" y="55" width="32.30000000000001" height="27.5" fill="#fbfbfb"/>
<rect x="162.5" y="55" width="32.5" height="27.5" fill="#fbfbfb"/>
<rect x="0" y="82.5" width="33.5" height="27.5" fill="#fbfbfb"/>
<rect x="33.5" y="82.5" width="32.0" height="27.5" fill="#fbfbfb"/>
<rect x="65.5" y="82.5" width="32.3" height="27.5" fill="#fbfbfb"/>
<rect x="97.8" y="82.5" width="32.39999999999999" height="27.5" fill="#fbfbfb"/>
<rect x="130.2" y="82.5" width="32.30000000000001" height="27.5" fill="#fbfbfb"/>
<rect x="162.5" y="82.5" width="32.5" height="27.5" fill="#fbfbfb"/>
<rect x="1" y="12" width="31.5" height="14" fill="#f0f0f0"/>
<rect x="2" y="13" width="1.2" height="13" fill="#808090"/>
<rect x="5" y="13" width="1.2" height="13" fill="#707080"/>
<rect x="11" y="13" width="3" height="13" fill="#40e0e8"/>
<rect x="16" y="13" width="1.2" height="13" fill="#b070c0"/>
<rect x="19" y="13" width="1.2" height="13" fill="#b070c0"/>
<rect x="24" y="13" width="3" height="13" fill="#40e0e8"/>
<rect x="27" y="13" width="1.2" height="13" fill="#707080"/>
<rect x="30" y="13" width="3" height="13" fill="#40d8d8"/>
<rect x="2" y="13" width="29.5" height="1" fill="#909090"/>
<path d="M3 7.5H30.5" stroke="#f08080" stroke-width="0.8"/>
<path d="M2 5L5 7.5L2 10Z" fill="#e82838" opacity="0.8"/>
<path d="M7 5L10 7.5L7 10Z" fill="#e82838" opacity="0.8"/>
<path d="M24 5L27 7.5L24 10Z" fill="#e82838" opacity="0.8"/>
<path d="M28 5L31 7.5L28 10Z" fill="#e82838" opacity="0.8"/>
<rect x="66.5" y="12" width="30.299999999999997" height="14" fill="#f0f0f0"/>
<rect x="67.5" y="13" width="1.2" height="13" fill="#808090"/>
<rect x="70.5" y="13" width="1.2" height="13" fill="#707080"/>
<rect x="76.5" y="13" width="3" height="13" fill="#40e0e8"/>
<rect x="81.5" y="13" width="1.2" height="13" fill="#b070c0"/>
<rect x="84.5" y="13" width="1.2" height="13" fill="#b070c0"/>
<rect x="89.5" y="13" width="3" height="13" fill="#40e0e8"/>
<rect x="92.5" y="13" width="1.2" height="13" fill="#707080"/>
<rect x="95.5" y="13" width="3" height="13" fill="#40d8d8"/>
<rect x="67.5" y="13" width="28.299999999999997" height="1" fill="#909090"/>
<path d="M68.5 7.5H94.8" stroke="#f08080" stroke-width="0.8"/>
<path d="M67.5 5L70.5 7.5L67.5 10Z" fill="#e82838" opacity="0.8"/>
<path d="M72.5 5L75.5 7.5L72.5 10Z" fill="#e82838" opacity="0.8"/>
<path d="M78.5 5L81.5 7.5L78.5 10Z" fill="#e82838" opacity="0.8"/>
<path d="M83.5 5L86.5 7.5L83.5 10Z" fill="#e82838" opacity="0.8"/>
<path d="M89.5 5L92.5 7.5L89.5 10Z" fill="#e82838" opacity="0.8"/>
<path d="M93.5 5L96.5 7.5L93.5 10Z" fill="#e82838" opacity="0.8"/>
<rect x="1" y="39.3" width="31.5" height="14" fill="#f0f0f0"/>
<rect x="2" y="40.3" width="1.2" height="13" fill="#808090"/>
<rect x="5" y="40.3" width="1.2" height="13" fill="#707080"/>
<rect x="11" y="40.3" width="3" height="13" fill="#40e0e8"/>
<rect x="16" y="40.3" width="1.2" height="13" fill="#b070c0"/>
<rect x="19" y="40.3" width="1.2" height="13" fill="#b070c0"/>
<rect x="24" y="40.3" width="3" height="13" fill="#40e0e8"/>
<rect x="27" y="40.3" width="1.2" height="13" fill="#707080"/>
<rect x="30" y="40.3" width="3" height="13" fill="#40d8d8"/>
<rect x="2" y="40.3" width="29.5" height="1" fill="#909090"/>
<path d="M3 34.8H30.5" stroke="#f08080" stroke-width="0.8"/>
<path d="M2 32.3L5 34.8L2 37.3Z" fill="#e82838" opacity="0.8"/>
<path d="M8 32.3L11 34.8L8 37.3Z" fill="#e82838" opacity="0.8"/>
<path d="M14 32.3L17 34.8L14 37.3Z" fill="#e82838" opacity="0.8"/>
<path d="M20 32.3L23 34.8L20 37.3Z" fill="#e82838" opacity="0.8"/>
<path d="M26 32.3L29 34.8L26 37.3Z" fill="#e82838" opacity="0.8"/>
<rect x="131.2" y="1" width="31" height="25.5" fill="#ececec"/>
<path d="M134.2 6V25M134.2 7H140.2M134.2 16H140.2" stroke="#e82838" stroke-width="0.9" fill="none"/>
<rect x="142.2" y="6" width="18" height="18" fill="#a0a0a8"/>
<rect x="144.2" y="8" width="4" height="5" fill="#40e0e8"/><rect x="144.2" y="16" width="4" height="5" fill="#40e0e8"/>
<rect x="149.2" y="7" width="2" height="16" fill="#b060c0"/><rect x="153.2" y="8" width="2.5" height="14" fill="#40e0e8"/><rect x="157.2" y="7" width="1" height="16" fill="#606060"/>
<path d="M37.0 29.8H43.0M37.0 52.3H43.0" stroke="#3030c0" stroke-width="1.5"/>
<path d="M40.0 29.8V52.3" stroke="#e82838" stroke-width="1.4"/>
<path d="M38.0 32.3L40.0 29.8L42.0 32.3ZM38.0 49.8L40.0 52.3L42.0 49.8Z" fill="#e82838"/>
<path d="M47.5 29.3V51.3M47.5 29.3H65.5M52.5 34.3H65.5M52.5 34.3V45.3M52.5 45.3H65.5M44.5 51.3H65.5" stroke="#111" stroke-width="1.3" fill="none"/>
<path d="M69.5 29.8H75.5M69.5 50.3H75.5" stroke="#3030c0" stroke-width="1.5"/>
<path d="M72.5 29.8V50.3" stroke="#e82838" stroke-width="1.4"/>
<path d="M70.5 32.3L72.5 29.8L74.5 32.3ZM70.5 47.8L72.5 50.3L74.5 47.8Z" fill="#e82838"/>
<path d="M77.5 29.3V54.3M77.5 30.3H97.5M82.5 35.3H97.5M82.5 35.3V47.3M82.5 47.3H97.5M77.5 52.3H97.5" stroke="#111" stroke-width="1.4" fill="none"/>
<path d="M97.8 36.3H103.8M97.8 43.3H103.8" stroke="#3030c0" stroke-width="1.5"/>
<path d="M100.8 36.3V43.3" stroke="#e82838" stroke-width="1.4"/>
<path d="M98.8 38.8L100.8 36.3L102.8 38.8ZM98.8 40.8L100.8 43.3L102.8 40.8Z" fill="#e82838"/>
<path d="M107.8 29.3V54.3M107.8 31.3H126.8M111.8 36.3H126.8M111.8 36.3V47.3M111.8 47.3H126.8M111.8 52.3H126.8" stroke="#111" stroke-width="1.2" fill="none"/>
<path d="M134.2 52.3V39.3H141.2" stroke="#e82838" stroke-width="1.1" fill="none"/><path d="M139.2 37.3L142.2 39.3L139.2 41.3Z" fill="#e82838"/>
<path d="M144.2 28.3V54.3M149.2 28.3V37.3H162.2M149.2 54.3V44.3H162.2" stroke="#111" stroke-width="1.2" fill="none"/><path d="M144.2 40.3H149.2" stroke="#3030c0" stroke-width="0.6" stroke-dasharray="1 1"/>
<path d="M167.5 52.3V39.3H174.5" stroke="#e82838" stroke-width="1.1" fill="none"/><path d="M172.5 37.3L175.5 39.3L172.5 41.3Z" fill="#e82838"/>
<path d="M177.5 28.3V54.3M182.5 28.3V37.3H194.5M182.5 54.3V44.3H194.5" stroke="#111" stroke-width="1.2" fill="none"/>
<path d="M4 61H10M4 75H10" stroke="#3030c0" stroke-width="1.5"/>
<path d="M7 61V75" stroke="#e82838" stroke-width="1.4"/>
<path d="M5 63.5L7 61L9 63.5ZM5 72.5L7 75L9 72.5Z" fill="#e82838"/>
<path d="M12 57V82M12 58H32M17 63H32M17 63V74M17 74H32M17 79H32" stroke="#111" stroke-width="1.2" fill="none"/>
<path d="M35.5 62H41.5M35.5 74H41.5" stroke="#9090d0" stroke-width="1.5"/>
<path d="M38.5 62V74" stroke="#e890a0" stroke-width="1"/>
<path d="M36.5 64.5L38.5 62L40.5 64.5ZM36.5 71.5L38.5 74L40.5 71.5Z" fill="#e890a0"/>
<path d="M50.5 57V82" stroke="#555" stroke-width="1.2"/><path d="M52.5 62H63.5M54.5 68H63.5M52.5 74H63.5" stroke="#aaa" stroke-width="0.9"/>
<path d="M68.5 60H74.5M68.5 76H74.5" stroke="#9090d0" stroke-width="1.5"/>
<path d="M71.5 60V76" stroke="#e890a0" stroke-width="1"/>
<path d="M69.5 62.5L71.5 60L73.5 62.5ZM69.5 73.5L71.5 76L73.5 73.5Z" fill="#e890a0"/>
<path d="M76.5 57V82M80.5 61V79" stroke="#888" stroke-width="1.1"/><path d="M76.5 59H96.5M80.5 62H96.5M80.5 77H96.5" stroke="#aaa" stroke-width="0.9"/>
<path d="M101.8 80V67H106.8" stroke="#e82838" stroke-width="1.1" fill="none"/>
<path d="M108.8 56V82M113.8 56V65H129.8M113.8 82V72H129.8" stroke="#111" stroke-width="1.3" fill="none"/>
<path d="M135.2 81V60M140.2 81V65" stroke="#e82838" stroke-width="1.1"/><path d="M133.2 62L135.2 59L137.2 62ZM138.2 67L140.2 64L142.2 67Z" fill="#e82838"/>
<path d="M136.2 60H162.2M142.2 65H162.2" stroke="#30a040" stroke-width="1" stroke-dasharray="1.5 1.5"/>
<path d="M168.5 57V76M173.5 57V71" stroke="#e82838" stroke-width="1.1"/><path d="M166.5 74L168.5 77L170.5 74ZM171.5 69L173.5 72L175.5 69Z" fill="#e82838"/>
<path d="M171.5 72H194.5M171.5 77H194.5" stroke="#30a040" stroke-width="1" stroke-dasharray="1.5 1.5"/>
<path d="M4 87.5H10M4 101.5H10" stroke="#3030c0" stroke-width="1.5"/>
<path d="M7 87.5V101.5" stroke="#e82838" stroke-width="1.4"/>
<path d="M5 90.0L7 87.5L9 90.0ZM5 99.0L7 101.5L9 99.0Z" fill="#e82838"/>
<path d="M12 84.5V109.5M12 85.5H32M12 106.5H32" stroke="#111" stroke-width="1.2" fill="none"/>
<rect x="17" y="87.5" width="15" height="12" fill="#50e0e8" stroke="#111" stroke-width="1.2"/><path d="M21 96.5L25 90.5M24 96.5L28 90.5" stroke="#206080" stroke-width="1.1"/>
<path d="M36.5 87.5H42.5M36.5 107.5H42.5" stroke="#3030c0" stroke-width="1.5"/>
<path d="M39.5 87.5V107.5" stroke="#e82838" stroke-width="1.4"/>
<path d="M37.5 90.0L39.5 87.5L41.5 90.0ZM37.5 105.0L39.5 107.5L41.5 105.0Z" fill="#e82838"/>
<path d="M44.5 84.5V109.5M44.5 85.5H65.5" stroke="#111" stroke-width="1.2"/>
<rect x="49.5" y="88.5" width="16" height="19" fill="#40d8f0" stroke="#111" stroke-width="1"/><path d="M49.5 92.5H65.5M49.5 97.0H65.5M49.5 101.5H65.5M49.5 105.5H65.5" stroke="#1080c0" stroke-width="1.6"/>
<path d="M68.5 91.5H74.5M68.5 100.5H74.5" stroke="#3030c0" stroke-width="1.5"/>
<path d="M71.5 91.5V100.5" stroke="#e82838" stroke-width="1.4"/>
<path d="M69.5 94.0L71.5 91.5L73.5 94.0ZM69.5 98.0L71.5 100.5L73.5 98.0Z" fill="#e82838"/>
<path d="M76.5 84.5V109.5M76.5 85.5H97.5" stroke="#111" stroke-width="1.2"/>
<rect x="80.5" y="88.5" width="17" height="19" fill="#40d8f0" stroke="#111" stroke-width="1"/><path d="M80.5 92.5H97.5M80.5 97.0H97.5M80.5 101.5H97.5M80.5 105.5H97.5" stroke="#1080c0" stroke-width="1.6"/>
<path d="M98.8 92.5H104.8M98.8 97.5H104.8" stroke="#9090d0" stroke-width="1.5"/>
<path d="M101.8 92.5V97.5" stroke="#e890a0" stroke-width="1"/>
<path d="M99.8 95.0L101.8 92.5L103.8 95.0ZM99.8 95.0L101.8 97.5L103.8 95.0Z" fill="#e890a0"/>
<path d="M108.8 84.5V109.5" stroke="#999" stroke-width="1.1"/><path d="M113.8 86.5H129.8M113.8 86.5V109.5" stroke="#222" stroke-width="1" fill="none"/><path d="M113.8 91.5H129.8M113.8 103.5H129.8" stroke="#60b0e0" stroke-width="2"/>
<path d="M134.2 109.5V97.5H139.2" stroke="#e82838" stroke-width="1.1" fill="none"/>
<path d="M141.2 87.5V109.5M141.2 87.5H162.2" stroke="#111" stroke-width="1.3" fill="none"/>
<rect x="145.2" y="90.5" width="17" height="19" fill="#40d8f0" stroke="#111" stroke-width="1"/><path d="M145.2 94.5H162.2M145.2 99.0H162.2M145.2 103.5H162.2M145.2 107.5H162.2" stroke="#1080c0" stroke-width="1.6"/>
<path d="M165.5 109.5V94.5H171.5" stroke="#e82838" stroke-width="0.9" fill="none"/>
<path d="M172.5 84.5V109.5" stroke="#999" stroke-width="1.1"/><path d="M176.5 87.5H194.5M176.5 87.5V109.5" stroke="#444" stroke-width="0.9" fill="none"/><path d="M176.5 93.5H194.5M176.5 104.5H194.5" stroke="#70c0e8" stroke-width="2.2"/>
<path d="M0.6 0V110" stroke="#111" stroke-width="1.3"/>
<path d="M34.1 0V110" stroke="#111" stroke-width="1.3"/>
<path d="M66.1 0V110" stroke="#111" stroke-width="1.3"/>
<path d="M98.39999999999999 0V110" stroke="#111" stroke-width="1.3"/>
<path d="M130.79999999999998 0V110" stroke="#111" stroke-width="1.3"/>
<path d="M163.1 0V110" stroke="#111" stroke-width="1.3"/>
<path d="M0 0.6H195" stroke="#111" stroke-width="1.3"/>
<path d="M0 27.900000000000002H195" stroke="#111" stroke-width="1.3"/>
<path d="M0 55.6H195" stroke="#111" stroke-width="1.3"/>
<path d="M0 83.1H195" stroke="#111" stroke-width="1.3"/></svg>
<div class="a" style="left:141px;top:387px;width:49.5px;height:16.2px;background:#ececec;border:1px solid;border-color:#fff #444 #444 #fff;box-sizing:border-box;box-shadow:inset -1px -1px 0 #a0a0a0"></div>
<div class="t" style="left:153.5px;top:389.5px;color:#1a1a1a;letter-spacing:-0.2px"><span style="text-decoration:underline">C</span>lose</div>

</div><!--/dialog-->

<!-- BOTTOM -->
<div id="bottom">
<div class="lbl" style="left:90px;top:496.5px">Production Note</div>
<div class="inp" style="left:90px;top:506.7px;width:153.6px;height:14.5px;border-top:1.2px solid #6a6a6a;border-left:1.2px solid #6a6a6a"></div>
<div class="a" style="left:252.5px;top:504.6px;width:17.5px;height:17.9px;background:#f8f8f8;border:1.5px solid #2a2a2a;box-sizing:border-box"></div>
<svg class="a" style="left:254px;top:506px" width="15" height="15"><path d="M3 3H8L10 5V12H3Z" fill="#fff" stroke="#a09080" stroke-width="1"/><path d="M4 12L12 3" stroke="#1050c0" stroke-width="2.2"/><path d="M10.5 4.5L13 2" stroke="#60a0f0" stroke-width="1.2"/></svg>
<div class="lbl" style="left:90px;top:525.5px">Price</div>
<div class="inp" style="left:126px;top:524px;width:58.8px;height:13px;border-top:1.2px solid #6a6a6a;border-left:1.2px solid #6a6a6a"></div>
<div class="lbl" style="left:130.5px;top:526px;color:#1a1a1a">359.53</div>
<div class="lbl" style="left:191.5px;top:525.5px">Discount %</div>
<div class="inp" style="left:241.2px;top:524.3px;width:30.8px;height:13.7px;border-top:1.2px solid #6a6a6a;border-left:1.2px solid #6a6a6a"></div>
<div class="lbl" style="left:245px;top:527.5px;color:#1a1a1a">0.00</div>

<svg class="a" style="left:80px;top:540px" width="220" height="30">
<path d="M170.9 9 L210.6 9 L206.9 25.3 L176.25 25.3 Z" fill="#f7f7f7" stroke="#222" stroke-width="1.1"/>
<path d="M133.4 9 L176.6 9 L171.25 25.3 L138.8 25.3 Z" fill="#f7f7f7" stroke="#222" stroke-width="1.1"/>
<path d="M94 9 L137.7 9 L132.3 25.3 L99.4 25.3 Z" fill="#f7f7f7" stroke="#222" stroke-width="1.1"/>
<path d="M11.6 9 L58.4 9 L53 25.3 L17 25.3 Z" fill="#f7f7f7" stroke="#222" stroke-width="1.1"/>
<path d="M53.6 9 L97.4 9 L92 25.3 L59 25.3 Z" fill="#f7f7f7" stroke="#222" stroke-width="1.1"/>
<path d="M4.3 8.8 H220" stroke="#2a2a2a" stroke-width="1.7"/>
</svg>
<svg class="a" style="left:80px;top:540px" width="840" height="12"><path d="M4.3 8.8 H837" stroke="#2a2a2a" stroke-width="1.7"/></svg>
<div class="lbl" style="left:99px;top:551px;color:#1a1a1a;letter-spacing:-0.62px">Situation</div>
<div class="lbl" style="left:140.5px;top:552px;color:#1a1a1a;letter-spacing:-0.55px">Solution</div>
<div class="lbl" style="left:180.6px;top:551px;color:#1a1a1a;letter-spacing:-0.7px">B. O. M.</div>
<div class="lbl" style="left:220.6px;top:551px;color:#1a1a1a;letter-spacing:-0.6px">Costing</div>
<div class="lbl" style="left:258px;top:551px;color:#1a1a1a;letter-spacing:-0.6px">Pricing</div>

<div class="a" style="left:84px;top:576.5px;width:67px;height:19.3px;background:#f0f0f0;border-top:1px solid #fff;border-left:1px solid #fff;border-right:1.5px solid #555;border-bottom:1.5px solid #555;box-sizing:border-box"></div>
<div class="lbl" style="left:110.5px;top:579.5px;color:#1a1a1a">O<span style="text-decoration:underline">K</span></div>
<div class="a" style="left:164.4px;top:576.5px;width:66px;height:19.3px;background:#f0f0f0;border-top:1px solid #fff;border-left:1px solid #fff;border-right:1.5px solid #555;border-bottom:1.5px solid #555;box-sizing:border-box"></div>
<div class="lbl" style="left:183px;top:579.5px;color:#1a1a1a">Cancel</div>

</div><!--/bottom-->
</body></html>
